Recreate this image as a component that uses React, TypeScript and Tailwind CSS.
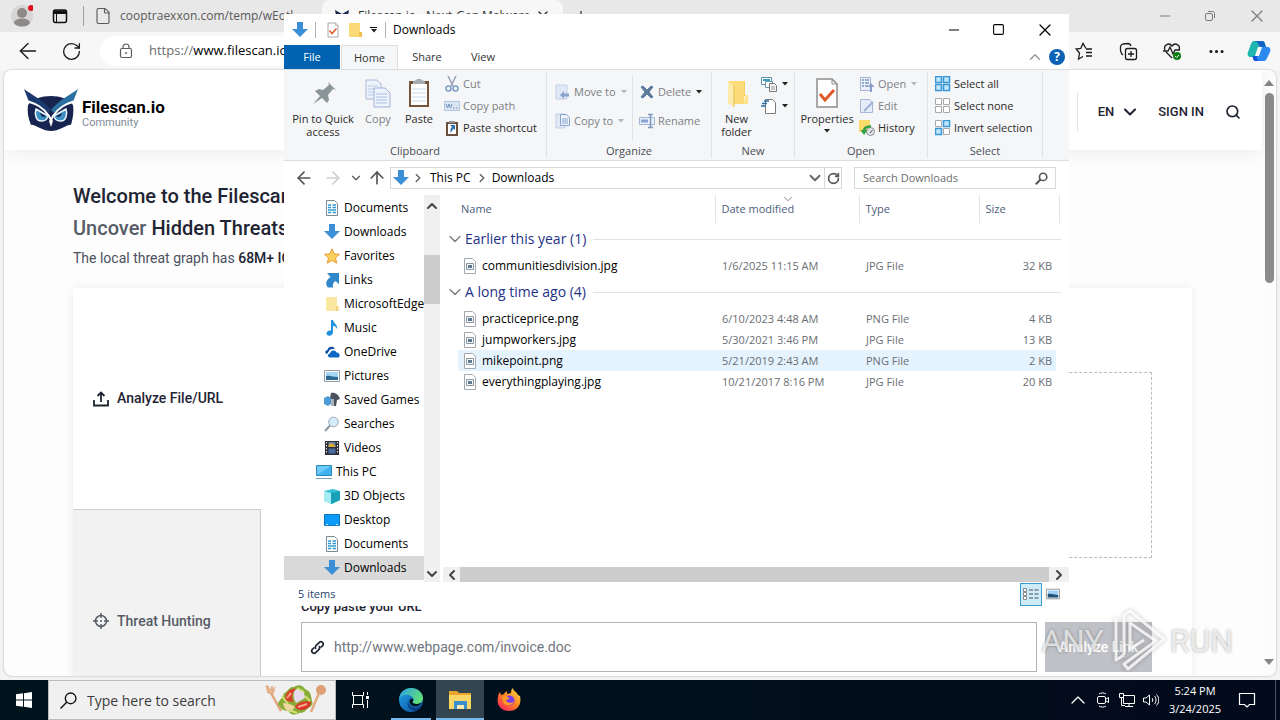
import type { ReactNode } from "react";
import {
  ArrowLeft,
  ArrowRight,
  ArrowUp,
  ChevronDown,
  ChevronLeft,
  ChevronRight,
  ChevronUp,
  File as FileIcon,
  Minus,
  MoreHorizontal,
  Plus,
  RotateCw,
  Search,
  Square,
  X,
} from "lucide-react";

/* ---------- Icons ---------- */

function Svg({ size = 16, box = 16, children }: { size?: number; box?: number; children: ReactNode }) {
  return (
    <svg width={size} height={size} viewBox={`0 0 ${box} ${box}`} fill="none" className="shrink-0" aria-hidden="true">
      {children}
    </svg>
  );
}

const DownloadArrow = () => (
  <Svg>
    <path d="M5 0h6v7h5l-8 8-8-8h5z" fill="#3b8fd6" />
  </Svg>
);

const DocumentIcon = () => (
  <Svg>
    <path d="M2.500.5h8l3 3v12h-11z" fill="#fff" stroke="#7d8a94" />
    <path d="M4 5h3M4 7.500h3M8.500 5H12M8.500 7.500H12M4 10h8M4 12.500h3M8.500 12.500H12" stroke="#2f9bd4" strokeWidth="1.500" />
  </Svg>
);

const StarIcon = () => (
  <Svg>
    <path d="M8 .8l2.200 5 5.300.5-4 3.600 1.200 5.300L8 12.400l-4.700 2.800 1.200-5.300-4-3.600 5.300-.5z" fill="#fbd05c" stroke="#e59a3a" />
  </Svg>
);

const LinksIcon = () => (
  <Svg>
    <path d="M3 1h12v11l-3.500-3C9 10.500 8.500 12.500 9 15.500H4C1 12 2 8 6.500 5z" fill="#2f86c8" />
  </Svg>
);

const FolderIcon = () => (
  <Svg>
    <path d="M2 1h11v9l1 1v4H2z" fill="#fbe6a2" />
    <path d="M13 10h1.500v5H12v-4z" fill="#f3d27a" />
  </Svg>
);

const QuickFolderIcon = () => (
  <Svg>
    <path d="M2 1h11v9h1v5H2z" fill="#fbd977" />
    <path d="M12 10h3v5h-3z" fill="#f0bf4c" />
  </Svg>
);

const MusicIcon = () => (
  <Svg>
    <path d="M7 0h2c.5 3.500 5 4.500 4 9-.8-2-2-3-4-3.200V12c0 2-1.500 3.700-3.700 3.700-1.800 0-3-1.200-2.700-2.700C3 11 5 10 7 10.800z" fill="#1f8fe0" />
  </Svg>
);

const OneDriveIcon = () => (
  <Svg>
    <path d="M3 10c-3-1-1.500-4 .5-4C4 3 8.500 1.500 11 4.500l-5 1-2 3z" fill="#0a4da2" />
    <path d="M6 13.500c-3 0-2.700-4 0-4C6.500 6 11 5.500 12.500 8.500c3.500-.3 4.500 5 1 5z" fill="#1068c4" />
  </Svg>
);

const PicturesIcon = () => (
  <Svg>
    <path d="M.5 2.500h15v11H.5z" fill="#fff" stroke="#8d9aa4" />
    <path d="M2 4h12v8H2z" fill="#a8d4f5" />
    <path d="M2 8c4-1 7 1 12 1v3H2z" fill="#2c6a94" />
  </Svg>
);

const GamesIcon = () => (
  <Svg>
    <path d="M7 1c4-1 8 2 9 6l-3 1-1 6H8l1-6-3-2z" fill="#47525c" />
    <path d="M0 6l4-2 3 2v6l-3 2-4-2z" fill="#4f9ad4" />
    <path d="M7 7h3v7H7z" fill="#aab4bc" />
  </Svg>
);

const SearchesIcon = () => (
  <Svg>
    <path d="M1 15l5-5.500" stroke="#8d98a1" strokeWidth="2" />
    <circle cx="9.500" cy="6" r="4.800" fill="#d5ecfa" stroke="#9aa9b5" />
  </Svg>
);

const VideosIcon = () => (
  <Svg>
    <path d="M1 1h14v14H1z" fill="#2c2f38" />
    <path d="M2.500 2v12M13.500 2v12" stroke="#d5d8dc" strokeDasharray="1.500 1.500" />
    <path d="M4.500 2h7v5h-7z" fill="#6f7f9e" />
    <path d="M4.500 5l3-2 4 3v1h-7z" fill="#d6b03a" />
    <path d="M4.500 8.500h7v5h-7z" fill="#486a9c" />
  </Svg>
);

const PcIcon = () => (
  <Svg>
    <path d="M.5 1.500h15v10H.5z" fill="#3fb2f2" stroke="#2a86b8" />
    <path d="M1 2h14L1 11z" fill="#6fccf8" />
    <path d="M0 14.500h16" stroke="#7aa5bd" />
  </Svg>
);

const CubeIcon = () => (
  <Svg>
    <path d="M0 3l9-2 7 2v9l-8 4-8-3z" fill="#2fc0d4" />
    <path d="M0 3l7 2v11l-7-3z" fill="#a5ecf2" />
    <path d="M7 5l9-2v9l-9 4z" fill="#1a9fb8" />
  </Svg>
);

const DesktopIcon = () => (
  <Svg>
    <path d="M.5 2.500h15v11H.5z" fill="#0c9cf5" stroke="#0f72bf" />
    <path d="M2 12.500h2M12 12.500h2" stroke="#bfe3fb" />
  </Svg>
);

const ImageFileIcon = () => (
  <Svg>
    <path d="M2.500.5h8l3 3v12h-11z" fill="#fff" stroke="#a3a9ae" />
    <path d="M4.500 5.500h7v6h-7z" fill="#f6f8fa" stroke="#8b959e" />
    <path d="M6 7h4v3H6z" fill="#5c7a96" />
  </Svg>
);

const CheckDocIcon = ({ size = 16 }: { size?: number }) => (
  <Svg size={size} box={32}>
    <path d="M6 2h15l5 5v23H6z" fill="#fff" stroke="#8d8d8d" strokeWidth="1.500" />
    <path d="M21 2v5h5" stroke="#8d8d8d" />
    <path d="M9 17l5 6 9-10" stroke="#e0592a" strokeWidth="3" />
  </Svg>
);

const PinIcon = () => (
  <Svg size={32} box={32}>
    <path d="M6 27l7-8-5-5 4-2 4 1 6-5-1-3 8 8-3-1-5 6 1 5-2 3-5-5z" fill="#8b9497" />
  </Svg>
);

const CopyIcon = () => (
  <Svg size={32} box={32}>
    <path d="M4 3h11l4 4v15H4z" fill="#eef3fb" stroke="#a9b9da" />
    <path d="M6 9h10M6 12h10M6 15h10M6 18h10" stroke="#b8c9e8" />
    <path d="M12 11h11l5 5v14H12z" fill="#eef3fb" stroke="#a1b3d7" />
    <path d="M14 17h11M14 20h11M14 23h11M14 26h11" stroke="#a9c0e6" />
  </Svg>
);

const PasteIcon = () => (
  <Svg size={32} box={32}>
    <path d="M6 4h20v26H6z" fill="#75543a" />
    <path d="M8 7h16v21H8z" fill="#fff" />
    <path d="M10 5c0-2 4-1 4-3h4c0 2 4 1 4 3v2H10z" fill="#a7adb2" />
    <path d="M9 12h14M9 16h14M9 20h14M9 24h14" stroke="#c4d9ea" />
  </Svg>
);

const CutIcon = () => (
  <Svg>
    <path d="M4 0l5 10M12 0L7 10" stroke="#96a3b3" strokeWidth="1.500" />
    <circle cx="4.500" cy="12.500" r="2.500" stroke="#7f9cc4" strokeWidth="1.500" />
    <circle cx="11.500" cy="12.500" r="2.500" stroke="#7f9cc4" strokeWidth="1.500" />
  </Svg>
);

const CopyPathIcon = () => (
  <Svg>
    <path d="M.5 3.500h15v9H.5z" fill="#dbe6f5" stroke="#b4c4dc" />
    <path d="M2 6l1.500 4L5 6l1.500 4L8 6M9 10h1.500M12 10h1.500" stroke="#7891b8" />
  </Svg>
);

const PasteShortcutIcon = () => (
  <Svg>
    <path d="M2 2h12v14H2z" fill="#6a4f3a" />
    <path d="M4 4h8v10H4z" fill="#fff" />
    <path d="M5 1h6v2H5z" fill="#8f979d" />
    <path d="M6 5h5v5L9.500 8.500 6.500 13V9L8 7z" fill="#2a6fae" />
  </Svg>
);

const MoveToIcon = () => (
  <Svg>
    <path d="M1 1h11v14H1z" fill="#dfe8f5" stroke="#c3d0e6" />
    <path d="M5 11l4-4v2.500h5v3H9V15z" fill="#8ba4cd" />
  </Svg>
);

const CopyToIcon = () => (
  <Svg>
    <path d="M1 1h9v14H1z" fill="#dfe8f5" stroke="#c3d0e6" />
    <path d="M5.500 1.500h6l3 3v8h-9z" fill="#eef3fb" stroke="#8ba4cd" />
    <path d="M7 6h6M7 8h6M7 10h6" stroke="#8ba4cd" />
  </Svg>
);

const DeleteIcon = () => (
  <Svg>
    <path d="M2 3l2-1 4 4 4-4 2 1-4 5 4 5-2 1-4-4-4 4-2-1 4-5z" fill="#5f7c9e" stroke="#5f7c9e" />
  </Svg>
);

const RenameIcon = () => (
  <Svg>
    <path d="M.5 4.500h15v7H.5z" fill="#e9f0f9" stroke="#a3b6d6" />
    <path d="M2 6.500h7v3H2z" fill="#86a3d1" />
    <path d="M9 1.500h5M9 14.500h5M11.500 1.500v13" stroke="#7e97bf" strokeWidth="1.500" />
  </Svg>
);

const NewFolderIcon = () => (
  <Svg size={32} box={32}>
    <path d="M7 4h17v22l2 1v-8h-3V4z" fill="#f6cf62" />
    <path d="M7 4h16v23H7z" fill="#fbdc79" />
    <path d="M7 4l6 5v21l-6-4z" fill="#fcebab" />
    <path d="M13 9v21" stroke="#e9bd4a" />
    <path d="M24 18h3v9h-4z" fill="#fce28c" />
  </Svg>
);

const NewItemIcon = () => (
  <Svg>
    <path d="M.5 1.500h10v7H.5z" fill="#fff" stroke="#5b8ea8" />
    <path d="M2 3h7v2H2z" fill="#3d9cc4" />
    <path d="M4.500 5.500h7v6h-7z" fill="#fff" stroke="#6a97ad" />
    <path d="M8.500 7.500h5l2 2v6h-7z" fill="#f4f4f4" stroke="#7b7b7b" />
    <path d="M10 11h4M10 13h4" stroke="#9a9a9a" />
  </Svg>
);

const EasyAccessIcon = () => (
  <Svg>
    <path d="M4.500 1.500h7l3 3v11h-10z" fill="#fff" stroke="#7b7b7b" />
    <path d="M3 3h5M1 5.500h5M0 8h5" stroke="#2b6ea6" strokeWidth="1.500" />
  </Svg>
);

const OpenIcon = () => (
  <Svg>
    <path d="M1.500 1.500h10v13h-10z" fill="#eaf0fa" stroke="#a6b5d3" />
    <path d="M3 4h2M3 7h2M3 10h2M6 4h4M6 7h4M6 10h3" stroke="#7f97c4" strokeWidth="1.500" />
    <path d="M11 16v-5H8.500L12 7l3.500 4H13v5z" fill="#8b9fc6" />
  </Svg>
);

const EditIcon = () => (
  <Svg>
    <path d="M1.500 1.500h9l3 3v10h-12z" fill="#e6edf9" stroke="#a6b5d3" />
    <path d="M5 13L14 4" stroke="#9db1d6" strokeWidth="2" />
  </Svg>
);

const HistoryIcon = () => (
  <Svg>
    <path d="M0 0h11v12H0z" fill="#fbdb6c" />
    <circle cx="11.500" cy="11.500" r="4" fill="#dfe3e6" stroke="#8c9297" />
    <path d="M11 13l2.500-3" stroke="#4e555b" />
    <path d="M5 13c-.5-5 2-7 7-6.500" stroke="#2fa045" strokeWidth="2.500" />
    <path d="M1.500 10h7L5 15z" fill="#2fa045" />
  </Svg>
);

function GridIcon({ on }: { on: boolean[] }) {
  const spots = ["M.5.5h6v6h-6z", "M8.500.5h6v6h-6z", "M.5 8.500h6v6h-6z", "M8.500 8.500h6v6h-6z"];
  return (
    <Svg>
      {spots.map((d, i) => (
        <path key={d} d={d} fill={on[i] ? "#bfe6fb" : "#fff"} stroke={on[i] ? "#3a97d6" : "#a9a9a9"} strokeWidth={on[i] ? 1.5 : 1} />
      ))}
    </Svg>
  );
}

const OwlLogo = () => (
  <svg width="54" height="42" viewBox="0 0 54 42" fill="none" aria-hidden="true">
    <path d="M4 16C8 10 18 7 27 7s18 3 22 9c1 6 0 13-2 20-3-1-5 2-9 3-4 2-7 3-11 3s-7-1-11-3c-4-1-6-4-9-3-3-7-4-14-3-20z" fill="#17244f" />
    <path d="M0 0c8 6 18 10 27 21l-3 3C18 18 11 16 5 13z" fill="#1a3a70" />
    <path d="M54 0c-8 6-18 10-27 21l3 3c6-6 13-8 19-11z" fill="#2a6f9f" />
    <path d="M3 12c9 3 16 6 22 15l2 4 2-4c6-9 13-12 22-15" stroke="#fff" strokeWidth="2" />
    <path d="M12 20l12 7c-1 6-10 7-12 1-1-3-1-5 0-8zM42 20l-12 7c1 6 10 7 12 1 1-3 1-5 0-8z" fill="#3d8fc4" stroke="#e9f5fb" strokeWidth="1.500" />
    <path d="M16 24l6 3c-2 2-5 1-6-3zM38 24l-6 3c2 2 5 1 6-3z" fill="#17244f" />
    <path d="M27 29l2 3-2 6-2-6z" fill="#fff" />
  </svg>
);

const EdgeIcon = () => (
  <Svg size={24} box={24}>
    <defs>
      <linearGradient id="edge-top" x1="0" y1="0" x2="1" y2="0.500">
        <stop offset="0" stopColor="#2c9ee8" />
        <stop offset="1" stopColor="#5fe07a" />
      </linearGradient>
      <linearGradient id="edge-body" x1="0" y1="0" x2="1" y2="1">
        <stop offset="0" stopColor="#1fa5e6" />
        <stop offset="1" stopColor="#0d4a9c" />
      </linearGradient>
    </defs>
    <circle cx="12" cy="12" r="12" fill="url(#edge-body)" />
    <path d="M0 11C1 4 6 0 12 0c7 0 12 5 12 10 0 4-3 6-6.500 6-3 0-4.500-1-4-2 1.500-1 1.500-2.500 1-3.500C12.500 5.500 3 5 0 11z" fill="url(#edge-top)" />
    <path d="M9.500 12.500c-1 6 5 9 12 5.500-1 2-3 4-5.500 5-6-.5-9-6-6.500-10.500z" fill="#0b3f86" />
    <path d="M14 11c.5 1.500 0 2-.7 3 0 1 2 2.200 4.700 2 2-.2 3-.5 4.500-1.500-1 3-5 4.500-8.500 3.500-4-1.500-4.500-6-2-7.500z" fill="#00121b" />
  </Svg>
);

const ExplorerIcon = () => (
  <Svg size={24} box={24}>
    <path d="M1 3h8l2 2h12v16H1z" fill="#e9a52e" />
    <path d="M1 7h22v14H1z" fill="#fcd667" />
    <path d="M6 13h13v8h-3v-4H9v4H6z" fill="#3a8fd0" />
    <path d="M9 17h7v4H9z" fill="#f8e8b0" />
  </Svg>
);

const FirefoxIcon = () => (
  <Svg size={24} box={24}>
    <defs>
      <linearGradient id="fox" x1="1" y1="0" x2="0.200" y2="1">
        <stop offset="0" stopColor="#ffe14a" />
        <stop offset="0.500" stopColor="#ff8a1f" />
        <stop offset="1" stopColor="#f5245c" />
      </linearGradient>
    </defs>
    <path d="M3 4l1 3 3-1c1-2 2-2 3-3v3l4-1c0-2 0-3 2-5 0 3 4 4 5 7l2 1c2 9-3 15-11 15S-1 17 1 9c0-2 1-4 2-5z" fill="url(#fox)" />
    <circle cx="12.500" cy="12.500" r="5" fill="#7a3df0" />
    <path d="M5 9c3-2 5-1 7 1 1 1-1 2-3 2 0 3 6 4 8 1-1 5-9 6-11 1z" fill="#ff9a26" />
  </Svg>
);

const CopilotIcon = () => (
  <Svg size={24} box={24}>
    <path d="M7 2h8c2 0 2.500 1 3 3l1 4h-7l-3 9H4c-3 0-4-2-3-5l3-8c.6-2 1.500-3 3-3z" fill="#1fb7b0" />
    <path d="M7 2h8c2 0 2.500 1 3 3l1 3h-5C11 8 12 2 7 2z" fill="#1464c8" />
    <path d="M17 22H9c-2 0-2.500-1-3-3l-.5-2H10c3 0 3-9 6-9h4c3 0 4 2 3 5l-3 6c-.6 2-1.500 3-3 3z" fill="#2b8af0" />
    <path d="M9 22c-2 0-2.500-1-3-3l-.5-2H10c-1 3 1 5 4 5z" fill="#1750d8" />
    <path d="M11 8h4l-3 9H8z" fill="#f7f7f7" />
  </Svg>
);

const FoodArt = () => (
  <svg width="62" height="32" viewBox="0 0 62 32" fill="none" aria-hidden="true">
    <path d="M6 9l10 18" stroke="#e0a37a" strokeWidth="2.500" />
    <path d="M1 2l2 7 5 1 2-7-2 4-1-5-2 5-2-5z" fill="#eab890" stroke="#e0a884" />
    <path d="M54 9L46 28" stroke="#e3ab80" strokeWidth="2.500" />
    <circle cx="56" cy="6" r="5" fill="#dea175" />
    <path d="M13 20c1-5 5-5 6-11 4-1 5-7 10-6 4-3 9-2 11 2 6 2 6 7 7 12 2 4-2 6-5 8-3 5-7 3-10 5-5 2-7-1-9-3-5 0-8-3-10-7z" fill="#87ad36" />
    <path d="M20 17c0-8 4-13 11-12-4 4-5 9-2 13z" fill="#d9402c" />
    <path d="M29 8c2-5 7-3 10 0l1 6-9 5c-2-3-3-7-2-11z" fill="#e8dcec" />
    <path d="M30 22c4-4 10-6 16-4 0 4-4 8-9 8-4 0-6-1-7-4z" fill="#d8392a" />
    <path d="M18 19c4 0 8 1 12 4l-4 5c-4 0-7-3-8-9z" fill="#f0d6a0" />
    <path d="M32 4l7 4M24 26l8 3M17 12l6 8M40 12l5 5" stroke="#cfe07a" strokeWidth="2" />
    <path d="M22 14l4-5M33 23l9-3" stroke="#f7a58c" strokeWidth="2" />
  </svg>
);

/* ---------- Browser ---------- */

function BrowserTabs() {
  return (
    <div className="flex h-8 shrink-0 items-center bg-[#e8e8e8] text-[12px] text-[#5a5a5a]">
      <button type="button" aria-label="Profile" className="relative ml-[11px]">
        <Svg size={22} box={22}>
          <circle cx="11" cy="11" r="11" fill="#d6d6d6" />
          <circle cx="11" cy="8" r="5" fill="#8e8a88" />
          <ellipse cx="11" cy="17.500" rx="8" ry="4" fill="#8e8a88" />
          <circle cx="20" cy="3" r="3" fill="#e01021" />
        </Svg>
      </button>
      <button type="button" aria-label="Tab actions" className="ml-[19px]">
        <Svg>
          <rect x="1.500" y="2" width="13" height="12.500" rx="2" stroke="#111" strokeWidth="1.500" />
          <path d="M1 2.500h14V6H1z" fill="#111" />
          <path d="M4.500 5v9" stroke="#111" />
        </Svg>
      </button>
      <span className="ml-[15px] h-5 w-px bg-[#a0a0a0]" />
      <a href="#tab-1" className="ml-[10px] flex w-[228px] items-center gap-[8px] overflow-hidden whitespace-nowrap">
        <FileIcon size={18} strokeWidth={1.500} className="shrink-0" />
        cooptraexxon.com/temp/wEotl
      </a>
      <a href="#tab-2" className="flex h-full w-[241px] items-center justify-between rounded-t-lg bg-[#f7f7f7] px-3 whitespace-nowrap text-[#333]">
        <span className="flex items-center gap-2">
          <Svg>
            <path d="M1 2l7 4 7-4-2 11-5 2-5-2z" fill="#17244f" />
          </Svg>
          Filescan.io - Next-Gen Malware
        </span>
        <X size={16} />
      </a>
      <button type="button" aria-label="New tab" className="ml-[10px] text-black">
        <Plus size={16} strokeWidth={1.500} />
      </button>
      <div className="ml-auto flex items-center gap-[30px] pr-[13px] text-[#7b7b7b]">
        <button type="button" aria-label="Minimize browser"><Minus size={16} strokeWidth={1.500} /></button>
        <button type="button" aria-label="Restore browser">
          <Svg size={14} box={14}>
            <rect x="2.500" y="4.500" width="7" height="7" rx="1.500" stroke="#7b7b7b" />
            <path d="M5 2.500h4.500c1.500 0 2 .5 2 2V9" stroke="#7b7b7b" />
          </Svg>
        </button>
        <button type="button" aria-label="Close browser"><X size={20} strokeWidth={1.500} /></button>
      </div>
    </div>
  );
}

function BrowserToolbar() {
  return (
    <div className="flex h-[38px] shrink-0 items-center bg-[#f7f7f7] text-[#1b1b1b]">
      <button type="button" aria-label="Back" className="ml-[15px]"><ArrowLeft size={26} strokeWidth={1.250} /></button>
      <button type="button" aria-label="Refresh" className="ml-5"><RotateCw size={21} strokeWidth={1.500} /></button>
      <div className="ml-[18px] flex h-[30px] flex-1 items-center rounded-full bg-white pl-[18px] text-[13px] text-[#6e6e6e]">
        <Svg>
          <rect x="2.500" y="5.500" width="11" height="9" rx="1.500" stroke="#5c5c5c" strokeWidth="1.200" />
          <path d="M5 5.500V4c0-4 6-4 6 0v1.500" stroke="#5c5c5c" strokeWidth="1.200" />
          <circle cx="8" cy="10" r="1" fill="#5c5c5c" />
        </Svg>
        <span className="ml-[15px]">https://<span className="text-black">www.filescan.io</span></span>
      </div>
      <div className="ml-4 flex items-center gap-[25px] pr-[9px]">
        <button type="button" aria-label="Favorites">
          <Svg size={19} box={19}>
            <path d="M11 6.500L8 1.500 5.700 6.500 1 7l3.500 4L3.500 17 8 14.500" stroke="#1b1b1b" strokeWidth="1.300" />
            <path d="M11 7h6M11 10.500h6M11 14h6" stroke="#1b1b1b" strokeWidth="1.300" />
          </Svg>
        </button>
        <button type="button" aria-label="Collections">
          <Svg size={19} box={19}>
            <path d="M4 13C1 11 1.500 5 1.500 5c0-2 1-2.500 2.500-3l5-.5c1.500 0 2.500 1 3 2.500" stroke="#1b1b1b" strokeWidth="1.300" />
            <rect x="6.500" y="6.500" width="11" height="11" rx="2" stroke="#1b1b1b" strokeWidth="1.300" />
            <path d="M12 9v6M9 12h6" stroke="#1b1b1b" strokeWidth="1.300" />
          </Svg>
        </button>
        <button type="button" aria-label="Browser essentials">
          <Svg size={19} box={19}>
            <path d="M2 8C0 3 6 0 9 4c3-4 9-1 7 4M3 10l6 6" stroke="#1b1b1b" strokeWidth="1.300" />
            <path d="M0 9h5l2-4 3 7 2-4h5" stroke="#1b1b1b" strokeWidth="1.300" />
            <circle cx="14" cy="14" r="4" fill="#0f7b14" />
            <path d="M12 14l1.500 1.500L16 13" stroke="#fff" />
          </Svg>
        </button>
        <button type="button" aria-label="More"><MoreHorizontal size={19} /></button>
        <button type="button" aria-label="Copilot" className="-ml-1"><CopilotIcon /></button>
      </div>
    </div>
  );
}

function SiteHeader() {
  return (
    <header className="relative flex h-20 shrink-0 items-center justify-between bg-white pr-[21px] pl-5 shadow-[0_4px_16px_rgba(0,0,0,0.06)]">
      <a href="#home" className="flex items-center gap-1">
        <OwlLogo />
        <span className="flex flex-col pt-2">
          <span className="text-[17px] leading-[18px] font-bold text-black">Filescan.io</span>
          <span className="text-[11px] leading-[14px] text-[#808b9b]">Community</span>
        </span>
      </a>
      <nav className="flex items-center pt-1 text-[13px] font-medium text-[#1f2433]">
        <span className="mr-5 h-10 w-px bg-[#e4e6ea]" />
        <button type="button" className="flex items-center gap-[6px]">
          EN
          <ChevronDown size={20} strokeWidth={2.500} />
        </button>
        <a href="#signin" className="ml-[18px]">SIGN IN</a>
        <button type="button" aria-label="Search site" className="ml-[21px]"><Search size={16} strokeWidth={2.500} /></button>
      </nav>
    </header>
  );
}

function SitePage() {
  return (
    <main className="flex min-h-0 flex-1 flex-col overflow-hidden pr-[70px] pl-[69px] text-[#1f2433]">
      <h1 className="mt-[30px] text-[20px] leading-8 font-medium whitespace-nowrap">
        Welcome to the Filescan
        <br />
        <span className="text-[#565b68]">Uncover</span> Hidden Threats
      </h1>
      <p className="text-[14px] leading-7 text-[#4b5060]">
        The local threat graph has <b className="font-medium text-[#1f2433]">68M+ IO</b>
      </p>
      <section className="mt-4 flex shrink-0 bg-white shadow-[0_0_10px_rgba(0,0,0,0.07)]">
        <div className="flex w-[188px] flex-col text-[14px] font-medium">
          <a href="#analyze" className="flex h-[221px] items-center gap-[8px] pl-5">
            <Svg>
              <path d="M1 9v5.500h14V9M8 11V2M4.500 5L8 1.500 11.500 5" stroke="#1f2433" strokeWidth="1.800" />
            </Svg>
            Analyze File/URL
          </a>
          <a href="#hunting" className="flex h-[223px] items-center gap-[8px] border-t border-r border-[#c9cbcf] bg-[#f2f2f2] pl-5 text-[#565b66]">
            <Svg>
              <circle cx="8" cy="8" r="5.500" stroke="#565b66" strokeWidth="1.500" />
              <path d="M8 0v5M8 11v5M0 8h5M11 8h5" stroke="#565b66" strokeWidth="1.500" />
              <circle cx="8" cy="8" r="1" fill="#565b66" />
            </Svg>
            Threat Hunting
          </a>
        </div>
        <form className="flex flex-1 flex-col px-10 pt-[84px]">
          <div className="h-[186px] border border-dashed border-[#b9bcc2]" />
          <label htmlFor="url" className="mt-[39px] mb-[5px] text-[13px] leading-5 font-medium">Copy paste your URL</label>
          <div className="flex gap-2">
            <div className="flex h-[50px] flex-1 items-center gap-[9px] border border-[#b0b3b8] bg-white pl-2">
              <Svg size={15}>
                <path d="M6.500 9.500c-2-2 0-3.500 1-4.500l2.500-2.500c2-2 5.500 1 3.500 3.500L11.500 8M9.500 6.500c2 2 0 3.500-1 4.500L6 13.500c-2 2-5.500-1-3.500-3.500l2-2" stroke="#1f2433" strokeWidth="1.800" />
              </Svg>
              <input id="url" type="text" placeholder="http://www.webpage.com/invoice.doc" className="flex-1 text-[14px] outline-none placeholder:text-[#70757d]" />
            </div>
            <button type="button" className="w-[107px] bg-[#bfc1c6] text-[14px] font-medium text-white">Analyze Link</button>
          </div>
        </form>
      </section>
    </main>
  );
}

function Browser() {
  return (
    <div className="flex min-h-0 flex-1 flex-col bg-[#f3f3f4]">
      <BrowserTabs />
      <BrowserToolbar />
      <div className="mx-1 mb-1 flex min-h-0 flex-1 overflow-hidden rounded-lg bg-[#fdfdfd] font-[Roboto,sans-serif] shadow-[0_0_2px_rgba(0,0,0,0.35)]">
        <div className="flex min-w-0 flex-1 flex-col">
          <SiteHeader />
          <SitePage />
        </div>
        <div className="flex w-[14px] flex-col items-center bg-[#fcfcfc] py-[9px]">
          <Svg size={10} box={10}><path d="M5 1l5 6H0z" fill="#858585" /></Svg>
          <span className="mt-1 h-[190px] w-[9px] rounded-full bg-[#8b8b8b]" />
          <span className="flex-1" />
          <Svg size={10} box={10}><path d="M5 8l5-6H0z" fill="#858585" /></Svg>
        </div>
      </div>
    </div>
  );
}

/* ---------- Explorer window ---------- */

const Caret = ({ dim }: { dim?: boolean }) => (
  <svg width="6" height="4" viewBox="0 0 6 4" className="shrink-0" aria-hidden="true">
    <path d="M0 0h6L3 3.500z" fill={dim ? "#b4b8bd" : "#222"} />
  </svg>
);

function BigButton({ icon, lines, dim, className, caret }: { icon: ReactNode; lines: string[]; dim?: boolean; className: string; caret?: boolean }) {
  return (
    <button type="button" className={`flex flex-col items-center pt-[5px] leading-[13px] whitespace-nowrap ${dim ? "text-[#7b7f85]" : "text-[#2b2b2b]"} ${className}`}>
      {icon}
      <span className="mt-[3px]">{lines[0]}</span>
      {lines[1] && <span>{lines[1]}</span>}
      {caret && <span className="pt-[4px]"><Caret /></span>}
    </button>
  );
}

function SmallButton({ icon, label, dim, caret, dimCaret }: { icon: ReactNode; label?: string; dim?: boolean; caret?: boolean; dimCaret?: boolean }) {
  return (
    <button type="button" className={`flex h-[22px] items-center gap-[3px] whitespace-nowrap ${dim ? "text-[#7b7f85]" : "text-[#2b2b2b]"}`}>
      {icon}
      {label}
      {caret && <span className="ml-[2px]"><Caret dim={dimCaret} /></span>}
    </button>
  );
}

function RibbonGroup({ label, className, children }: { label: string; className: string; children: ReactNode }) {
  return (
    <div className={`flex flex-col border-r border-[#dfe1e4] ${className}`}>
      <div className="flex flex-1">{children}</div>
      <div className="text-center leading-[14px] text-[#4a4e54]">{label}</div>
    </div>
  );
}

function Ribbon() {
  return (
    <div className="flex h-[92px] shrink-0 border-y border-[#dcdddf] bg-[#f5f6f7] py-[2px] text-[11px]">
      <RibbonGroup label="Clipboard" className="w-[263px]">
        <BigButton icon={<PinIcon />} lines={["Pin to Quick", "access"]} className="w-[78px]" />
        <BigButton icon={<CopyIcon />} lines={["Copy"]} dim className="w-[32px]" />
        <BigButton icon={<PasteIcon />} lines={["Paste"]} className="w-[50px]" />
        <div className="flex flex-col pt-px">
          <SmallButton icon={<CutIcon />} label="Cut" dim />
          <SmallButton icon={<CopyPathIcon />} label="Copy path" dim />
          <SmallButton icon={<PasteShortcutIcon />} label="Paste shortcut" />
        </div>
      </RibbonGroup>
      <RibbonGroup label="Organize" className="w-[165px]">
        <div className="flex w-[78px] flex-col gap-[7px] pt-[9px] pl-2">
          <SmallButton icon={<MoveToIcon />} label="Move to" dim caret dimCaret />
          <SmallButton icon={<CopyToIcon />} label="Copy to" dim caret dimCaret />
        </div>
        <span className="my-1 ml-[7px] w-px bg-[#dfe1e4]" />
        <div className="flex flex-col gap-[7px] pt-[9px] pl-[6px]">
          <SmallButton icon={<DeleteIcon />} label="Delete" dim caret />
          <SmallButton icon={<RenameIcon />} label="Rename" dim />
        </div>
      </RibbonGroup>
      <RibbonGroup label="New" className="w-[83px]">
        <BigButton icon={<NewFolderIcon />} lines={["New", "folder"]} className="w-[49px]" />
        <div className="flex flex-col pt-px">
          <SmallButton icon={<NewItemIcon />} caret />
          <SmallButton icon={<EasyAccessIcon />} caret />
        </div>
      </RibbonGroup>
      <RibbonGroup label="Open" className="w-[133px]">
        <BigButton icon={<CheckDocIcon size={32} />} lines={["Properties"]} caret className="w-[64px]" />
        <div className="flex flex-col pt-px">
          <SmallButton icon={<OpenIcon />} label="Open" dim caret dimCaret />
          <SmallButton icon={<EditIcon />} label="Edit" dim />
          <SmallButton icon={<HistoryIcon />} label="History" />
        </div>
      </RibbonGroup>
      <RibbonGroup label="Select" className="w-[115px]">
        <div className="flex flex-col pt-px pl-[7px]">
          <SmallButton icon={<GridIcon on={[true, true, true, true]} />} label="Select all" />
          <SmallButton icon={<GridIcon on={[false, false, false, false]} />} label="Select none" />
          <SmallButton icon={<GridIcon on={[false, true, true, false]} />} label="Invert selection" />
        </div>
      </RibbonGroup>
    </div>
  );
}

const places = [
  { name: "Documents", icon: <DocumentIcon /> },
  { name: "Downloads", icon: <DownloadArrow /> },
  { name: "Favorites", icon: <StarIcon /> },
  { name: "Links", icon: <LinksIcon /> },
  { name: "MicrosoftEdge", icon: <FolderIcon /> },
  { name: "Music", icon: <MusicIcon /> },
  { name: "OneDrive", icon: <OneDriveIcon /> },
  { name: "Pictures", icon: <PicturesIcon /> },
  { name: "Saved Games", icon: <GamesIcon /> },
  { name: "Searches", icon: <SearchesIcon /> },
  { name: "Videos", icon: <VideosIcon /> },
  { name: "This PC", icon: <PcIcon />, root: true },
  { name: "3D Objects", icon: <CubeIcon /> },
  { name: "Desktop", icon: <DesktopIcon /> },
  { name: "Documents", icon: <DocumentIcon /> },
  { name: "Downloads", icon: <DownloadArrow />, active: true },
];

const groups = [
  {
    title: "Earlier this year (1)",
    files: [{ name: "communitiesdivision.jpg", date: "1/6/2025 11:15 AM", type: "JPG File", size: "32 KB" }],
  },
  {
    title: "A long time ago (4)",
    files: [
      { name: "practiceprice.png", date: "6/10/2023 4:48 AM", type: "PNG File", size: "4 KB" },
      { name: "jumpworkers.jpg", date: "5/30/2021 3:46 PM", type: "JPG File", size: "13 KB" },
      { name: "mikepoint.png", date: "5/21/2019 2:43 AM", type: "PNG File", size: "2 KB", hover: true },
      { name: "everythingplaying.jpg", date: "10/21/2017 8:16 PM", type: "JPG File", size: "20 KB" },
    ],
  },
];

function NavPane() {
  return (
    <div className="flex w-[156px] shrink-0">
      <nav className="flex w-[140px] flex-col pt-px">
        {places.map((p, i) => (
          <a
            key={i}
            href={`#place-${i}`}
            className={`flex h-6 shrink-0 items-center gap-1 whitespace-nowrap text-black ${p.root ? "pl-8" : "pl-10"} ${p.active ? "bg-[#d9d9d9]" : ""}`}
          >
            {p.icon}
            {p.name}
          </a>
        ))}
      </nav>
      <div className="flex w-4 flex-col items-center bg-[#f0f0f0] text-[#444]">
        <ChevronUp size={16} strokeWidth={3} className="mt-[3px]" />
        <span className="mt-[41px] h-[49px] w-full bg-[#cdcdcd]" />
        <span className="flex-1" />
        <ChevronDown size={16} strokeWidth={3} />
      </div>
    </div>
  );
}

function FileList() {
  return (
    <div className="ml-[3px] flex min-w-0 flex-1 flex-col">
      <table className="w-full table-fixed border-collapse text-left text-[11px] text-[#6a6e73]">
        <colgroup>
          <col className="w-[15px]" />
          <col />
          <col className="w-[144px]" />
          <col className="w-[120px]" />
          <col className="w-[77px]" />
          <col className="w-[13px]" />
        </colgroup>
        <thead>
          <tr className="h-7 text-[#4c607a]">
            <td />
            <th className="p-0 pl-[3px] font-normal">Name</th>
            <th className="relative border-l border-[#e5e5e5] p-0 pl-[6px] font-normal">
              Date modified
              <ChevronDown size={14} strokeWidth={1.500} className="absolute -top-[3px] left-[65px] text-[#777]" />
            </th>
            <th className="border-l border-[#e5e5e5] p-0 pl-[6px] font-normal">Type</th>
            <th className="border-l border-[#e5e5e5] p-0 pl-[6px] font-normal">Size</th>
            <td className="p-0"><span className="ml-[3px] block h-7 w-px bg-[#e5e5e5]" /></td>
          </tr>
        </thead>
        {groups.map((g) => (
          <tbody key={g.title}>
            <tr className="h-8">
              <th colSpan={6} scope="rowgroup" className="p-0 pr-2 pl-[2px] text-[14px] font-normal text-[#1e3287]">
                <span className="flex items-center whitespace-nowrap">
                  <ChevronDown size={20} strokeWidth={1.500} className="text-[#777]" />
                  {g.title}
                  <span className="ml-[7px] h-px flex-1 bg-[#e2e2e2]" />
                </span>
              </th>
            </tr>
            {g.files.map((f) => (
              <tr key={f.name} className="h-[21px] whitespace-nowrap">
                <td className="p-0" />
                <td className={`p-0 pl-1 text-[12px] text-black ${f.hover ? "bg-[#e5f3ff]" : ""}`}>
                  <span className="flex items-center gap-1">
                    <ImageFileIcon />
                    {f.name}
                  </span>
                </td>
                <td className={`p-0 pl-[7px] ${f.hover ? "bg-[#e5f3ff]" : ""}`}>{f.date}</td>
                <td className={`p-0 pl-[7px] ${f.hover ? "bg-[#e5f3ff]" : ""}`}>{f.type}</td>
                <td className={`p-0 pr-1 text-right ${f.hover ? "bg-[#e5f3ff]" : ""}`}>{f.size}</td>
                <td className="p-0" />
              </tr>
            ))}
          </tbody>
        ))}
      </table>
      <div className="mt-auto flex h-[15px] items-center bg-[#f0f0f0] text-[#444]">
        <span className="flex w-[17px] justify-center"><ChevronLeft size={16} strokeWidth={3} /></span>
        <span className="h-full flex-1 bg-[#cdcdcd]" />
        <span className="flex w-5 justify-center"><ChevronRight size={16} strokeWidth={3} /></span>
      </div>
    </div>
  );
}

function ExplorerWindow() {
  return (
    <section aria-label="Downloads" className="absolute top-[14px] right-[211px] bottom-[114px] left-[284px] flex flex-col overflow-hidden bg-white text-[12px] leading-[16px] text-black">
      <div className="flex h-[31px] shrink-0 items-center pl-2">
        <DownloadArrow />
        <span className="ml-[7px] h-4 w-px bg-[#b5b5b5]" />
        <button type="button" aria-label="Properties" className="ml-[9px]"><CheckDocIcon size={16} /></button>
        <button type="button" aria-label="New folder" className="ml-[6px]"><QuickFolderIcon /></button>
        <button type="button" aria-label="Customize" className="ml-[7px] flex flex-col items-center gap-px">
          <span className="h-px w-[7px] bg-black" />
          <Caret />
        </button>
        <span className="ml-[8px] h-4 w-px bg-[#b5b5b5]" />
        <span className="ml-[7px]">Downloads</span>
        <div className="ml-auto flex items-center gap-[30px] pr-[14px]">
          <button type="button" aria-label="Minimize"><Minus size={16} strokeWidth={1.500} /></button>
          <button type="button" aria-label="Maximize"><Square size={13} strokeWidth={2} /></button>
          <button type="button" aria-label="Close"><X size={20} strokeWidth={1.500} /></button>
        </div>
      </div>
      <div className="flex h-6 shrink-0 items-stretch text-[11px] text-[#333]">
        <button type="button" className="w-14 bg-[#0063b1] text-white">File</button>
        <button type="button" className="-mb-px ml-px w-[57px] border-x border-t border-[#dcdddf] bg-[#f5f6f7]">Home</button>
        <button type="button" className="w-[58px]">Share</button>
        <button type="button" className="w-[54px]">View</button>
        <div className="ml-auto flex items-center gap-[5px] pr-[4px]">
          <ChevronUp size={18} strokeWidth={2} className="text-[#9a9a9a]" />
          <button type="button" aria-label="Help" className="size-4 rounded-full bg-[#0c62b5] text-[12px] font-bold text-white">?</button>
        </div>
      </div>
      <Ribbon />
      <div className="flex h-[34px] shrink-0 items-center pr-[13px] pl-[10px] text-[#555]">
        <button type="button" aria-label="Back"><ArrowLeft size={20} strokeWidth={2} /></button>
        <button type="button" aria-label="Forward" className="ml-[9px] text-[#cfcfcf]"><ArrowRight size={20} strokeWidth={2} /></button>
        <button type="button" aria-label="Recent" className="ml-[6px]"><ChevronDown size={14} strokeWidth={2} /></button>
        <button type="button" aria-label="Up" className="ml-1"><ArrowUp size={20} strokeWidth={2} /></button>
        <div className="ml-[3px] flex h-[22px] flex-1 items-center border border-[#d9d9d9] pl-[2px] text-black">
          <DownloadArrow />
          <ChevronRight size={14} strokeWidth={2.500} className="ml-[2px] text-[#666]" />
          <a href="#this-pc" className="ml-[5px]">This PC</a>
          <ChevronRight size={14} strokeWidth={2.500} className="ml-1 text-[#666]" />
          <a href="#downloads" className="ml-[3px]">Downloads</a>
          <ChevronDown size={18} strokeWidth={2.500} className="ml-auto text-[#666]" />
          <button type="button" aria-label="Refresh folder" className="flex h-full w-[17px] items-center justify-center border-l border-[#d9d9d9] text-[#555]">
            <RotateCw size={13} strokeWidth={3} />
          </button>
        </div>
        <div className="ml-3 flex h-[22px] w-[202px] items-center border border-[#d9d9d9] pr-[7px] pl-2">
          <input type="text" aria-label="Search Downloads" placeholder="Search Downloads" className="min-w-0 flex-1 text-[11px] outline-none placeholder:text-[#6d6d6d]" />
          <Svg size={13}>
            <circle cx="10" cy="6" r="4.500" stroke="#555" strokeWidth="2" />
            <path d="M7 9l-6 6" stroke="#555" strokeWidth="2.500" />
          </Svg>
        </div>
      </div>
      <div className="flex min-h-0 flex-1">
        <NavPane />
        <FileList />
      </div>
      <div className="flex h-6 shrink-0 items-center pr-[9px] pl-[14px] text-[#1e3f70]">
        <span className="text-[11px]">5 items</span>
        <div className="ml-auto flex items-center gap-[4px]">
          <button type="button" aria-label="Details" className="flex h-[23px] w-[22px] items-center justify-center border border-[#3a9bd0] bg-[#cdebf9]">
            <Svg>
              <path d="M.5 2.500h3v3h-3zM.5 6.500h3v3h-3zM.5 10.500h3v3h-3z" fill="#fff" stroke="#8a8a8a" />
              <path d="M6 4h4M11.500 4h4M6 8h4M11.500 8h4M6 12h4M11.500 12h4" stroke="#4d4d4d" />
            </Svg>
          </button>
          <button type="button" aria-label="Thumbnails" className="w-[14px]">
            <Svg size={14}>
              <path d="M.5 2.500h15v11H.5z" fill="#fff" stroke="#8a8a8a" />
              <path d="M2 4h12v8H2z" fill="#9fd0f5" />
              <path d="M2 8c4-1 7 1 12 1v3H2z" fill="#264f7a" />
            </Svg>
          </button>
        </div>
      </div>
    </section>
  );
}

/* ---------- Taskbar ---------- */

function Taskbar() {
  return (
    <footer className="flex h-10 shrink-0 items-stretch bg-linear-to-r from-[#00141d] to-[#020a1b] text-white">
      <button type="button" aria-label="Start" className="flex w-12 items-center justify-center">
        <Svg>
          <path d="M0 2.300l7-1v6.200H0zM8 1.200L16 0v7.500H8zM0 8.500h7v6.200l-7-1zM8 8.500h8V16l-8-1.200z" fill="#fff" />
        </Svg>
      </button>
      <div className="flex w-[288px] items-center border border-[#b9bcbe] bg-[#f0f0f0] pr-2 pl-[11px] text-[#222]">
        <Svg size={17}>
          <circle cx="10" cy="6" r="5" stroke="#111" strokeWidth="1.300" />
          <path d="M6.500 9.500L.5 15.500" stroke="#111" strokeWidth="1.300" />
        </Svg>
        <input type="text" aria-label="Type here to search" placeholder="Type here to search" className="ml-[10px] min-w-0 flex-1 text-[14px] outline-none placeholder:text-[#3c3c3c]" />
        <FoodArt />
      </div>
      <button type="button" aria-label="Task view" className="flex w-12 items-center justify-center">
        <Svg size={18} box={18}>
          <path d="M1.500 1v3.500h11V1M1.500 17v-3.500h11V17M2.500 4.500v9M11.500 4.500v9M16.500 1v3M16.500 9v8" stroke="#fff" />
          <path d="M15 5h3v3h-3z" fill="#fff" />
        </Svg>
      </button>
      <button type="button" aria-label="Edge" className="flex w-[54px] flex-col items-center px-[7px] pt-2">
        <EdgeIcon />
        <span className="mt-auto h-[2px] w-full bg-[#76b9ed]" />
      </button>
      <button type="button" aria-label="File Explorer" className="-ml-[2px] flex w-12 flex-col items-center bg-[#33454f] pt-2">
        <ExplorerIcon />
        <span className="mt-auto h-[2px] w-full bg-[#76b9ed]" />
      </button>
      <button type="button" aria-label="Firefox" className="flex w-[50px] items-center justify-center">
        <FirefoxIcon />
      </button>
      <div className="ml-auto flex items-center">
        <button type="button" aria-label="Show hidden icons"><ChevronUp size={24} strokeWidth={1.250} /></button>
        <button type="button" aria-label="Meet now" className="ml-[5px]">
          <Svg>
            <rect x="2.500" y="4.500" width="8" height="7" rx="1.500" stroke="#fff" />
            <path d="M11 7l2.500-1.500v5L11 9M4 2c2-1.500 5-1.500 7 0M4 14c2 1.500 5 1.500 7 0" stroke="#fff" />
          </Svg>
        </button>
        <button type="button" aria-label="Network" className="ml-[8px]">
          <Svg>
            <path d="M4.500 3.500h11v8h-11zM6 14.500h8M10 11.500v3M.5 1.500h4v4h-4zM2.500 5.500v8H6" stroke="#fff" />
          </Svg>
        </button>
        <button type="button" aria-label="Volume" className="ml-[8px]">
          <Svg>
            <path d="M.5 6h2.500l3.500-3v10L3 10H.5zM9 6c1 1 1 3 0 4M11.500 4c2 2 2 6 0 8M13.500 2.500c3 3 3 8 0 11" stroke="#fff" />
          </Svg>
        </button>
        <div className="ml-[7px] w-[58px] text-center text-[11px] leading-[18px] whitespace-nowrap">
          5:24 PM
          <br />
          3/24/2025
        </div>
        <button type="button" aria-label="Notifications" className="ml-[14px]">
          <Svg size={18} box={18}>
            <path d="M1.500 2.500h15v11h-5L9 16l-2.500-2.500h-5z" stroke="#fff" strokeWidth="1.200" />
          </Svg>
        </button>
        <span className="ml-[19px] h-10 w-[5px] border-l border-[#4a5362]" />
      </div>
    </footer>
  );
}

function Watermark() {
  return (
    <div aria-hidden="true" className="pointer-events-none absolute right-[47px] bottom-[44px] flex items-center font-[Roboto,sans-serif] text-[32px] leading-[70px] text-white/70 [text-shadow:0_0_3px_rgba(0,0,0,0.35)]">
      ANY
      <svg width="66" height="66" viewBox="0 0 66 66" fill="none" className="drop-shadow-[0_0_2px_rgba(0,0,0,0.3)]">
        <path d="M12 10v42l8-5M20 47V7l6-4 34 28L24 61l-4-5 32-23-26-18v26l14-9" stroke="#fff" strokeOpacity="0.800" strokeWidth="3" strokeLinejoin="round" />
      </svg>
      RUN
    </div>
  );
}

export default function App() {
  return (
    <div className="relative flex h-screen flex-col overflow-hidden font-['Open_Sans','Noto_Sans',sans-serif]">
      <Browser />
      <ExplorerWindow />
      <Watermark />
      <Taskbar />
    </div>
  );
}
